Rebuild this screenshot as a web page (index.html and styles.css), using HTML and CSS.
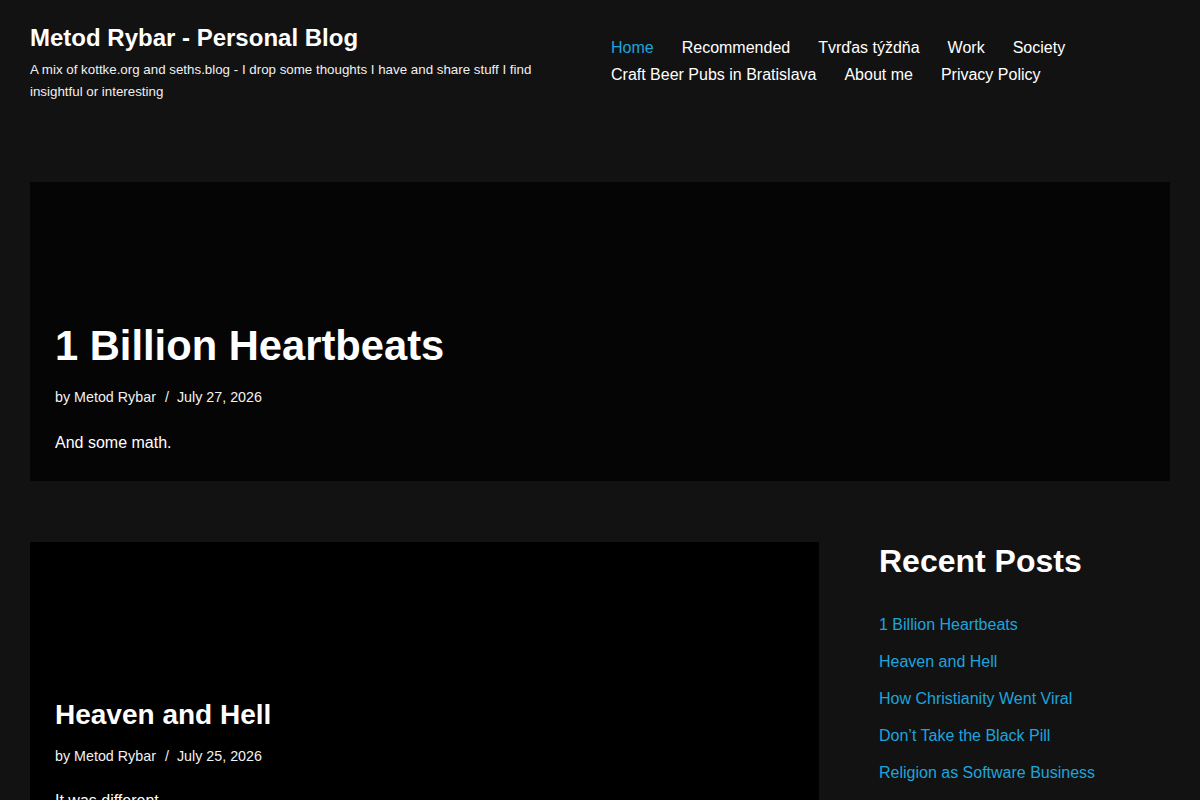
FILE: index.html
```html
<!DOCTYPE html>
<html lang="en">
<head>
    <meta charset="UTF-8">
    <meta name="viewport" content="width=device-width, initial-scale=1.0">
    <title>Metod Rybar - Personal Blog</title>
    <link rel="stylesheet" href="styles.css">
</head>
<body>
    <header class="site-header">
        <div class="container header-inner">
            <div class="branding">
                <p class="site-title"><a href="#">Metod Rybar - Personal Blog</a></p>
                <p class="site-tagline">A mix of kottke.org and seths.blog - I drop some thoughts I have and share stuff I find insightful or interesting</p>
            </div>
            <nav class="primary-menu">
                <a href="#" class="current">Home</a>
                <a href="#">Recommended</a>
                <a href="#">Tvrďas týždňa</a>
                <a href="#">Work</a>
                <a href="#">Society</a>
                <a href="#">Craft Beer Pubs in Bratislava</a>
                <a href="#">About me</a>
                <a href="#">Privacy Policy</a>
            </nav>
        </div>
    </header>

    <main class="container">
        <article class="post-card featured">
            <h2 class="post-title"><a href="#">1 Billion Heartbeats</a></h2>
            <p class="post-meta">by <a href="#">Metod Rybar</a><span class="sep">/</span>July 27, 2026</p>
            <p class="post-excerpt">And some math.</p>
        </article>

        <div class="content-row">
            <div class="posts">
                <article class="post-card">
                    <h2 class="post-title"><a href="#">Heaven and Hell</a></h2>
                    <p class="post-meta">by <a href="#">Metod Rybar</a><span class="sep">/</span>July 25, 2026</p>
                    <p class="post-excerpt">It was different.</p>
                </article>
            </div>

            <aside class="sidebar">
                <h3 class="widget-title">Recent Posts</h3>
                <ul class="recent-posts">
                    <li><a href="#">1 Billion Heartbeats</a></li>
                    <li><a href="#">Heaven and Hell</a></li>
                    <li><a href="#">How Christianity Went Viral</a></li>
                    <li><a href="#">Don’t Take the Black Pill</a></li>
                    <li><a href="#">Religion as Software Business</a></li>
                </ul>
            </aside>
        </div>
    </main>
</body>
</html>
```

FILE: styles.css
```css
body {
    font-family: 'Liberation Sans', Arial, sans-serif;
    background: #121212;
    color: #fff;
    margin: 0;
    font-size: 16px;
    line-height: 1.6;
}

a {
    color: inherit;
    text-decoration: none;
}

p {
    margin: 0;
}

.container {
    max-width: 1140px;
    margin: 0 auto;
    padding: 0 30px;
}

/* header */

.site-header {
    padding: 22px 0 79px;
}

.header-inner {
    display: grid;
    grid-template-columns: 540px 1fr;
    column-gap: 41px;
}

.site-title {
    font-size: 24px;
    font-weight: bold;
    line-height: 1.35;
}

.site-tagline {
    font-size: 13.33px;
    line-height: 22px;
    margin-top: 5px;
    color: #f0f0f0;
}

.primary-menu {
    display: flex;
    flex-wrap: wrap;
    column-gap: 28px;
    padding-top: 12px;
    line-height: 27px;
    align-content: flex-start;
}

.primary-menu a.current {
    color: #1ea4dc;
}

/* posts */

.post-card {
    display: flex;
    flex-direction: column;
    justify-content: flex-end;
    min-height: 297px;
    padding: 25px;
    box-sizing: border-box;
    background: #000;
}

.post-card.featured {
    background: #050505;
    min-height: 299px;
    margin-bottom: 61px;
}

.post-title {
    font-size: 28px;
    line-height: 1.2;
    margin: 0 0 14px;
}

.featured .post-title {
    font-size: 41.7px;
    line-height: 48px;
    margin-bottom: 16px;
}

.post-meta {
    font-size: 14.3px;
    line-height: 22px;
    margin-bottom: 21px;
    color: #f2f2f2;
}

.featured .post-meta {
    margin-bottom: 22px;
}

.post-meta .sep {
    padding: 0 8px 0 9px;
}

.post-excerpt {
    line-height: 26px;
}

/* layout below the featured post */

.content-row {
    display: grid;
    grid-template-columns: 789px 1fr;
    column-gap: 60px;
}

.widget-title {
    font-size: 32px;
    line-height: 1.2;
    margin: 0 0 31px;
}

.recent-posts {
    list-style: none;
    margin: 0;
    padding: 0;
}

.recent-posts li {
    line-height: 26px;
    margin-bottom: 11px;
}

.recent-posts a {
    color: #1ea4dc;
}
```
